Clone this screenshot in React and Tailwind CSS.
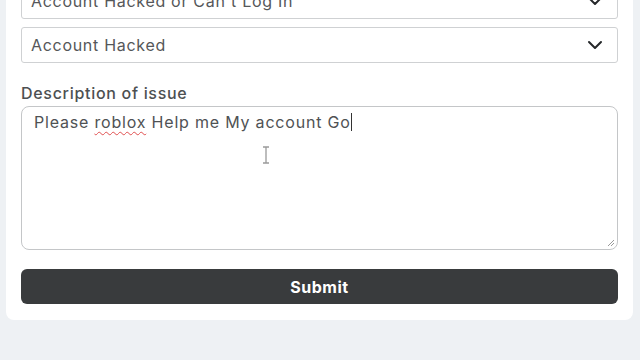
import { ChevronDown } from 'lucide-react';

function Select({ label }) {
  return (
    <div className="flex items-center justify-between h-9 px-[9px] border border-[#cfd1d3] rounded-[3px] bg-white">
      <span className="text-[16px] tracking-[0.7px] text-[#555759]">{label}</span>
      <ChevronDown className="w-6 h-6 text-[#25282a] mr-[1px]" strokeWidth={2} />
    </div>
  );
}

export default function App() {
  return (
    <div className="w-[640px] h-[360px] overflow-hidden bg-[#eef1f4]" style={{ fontFamily: 'Inter, "Noto Sans", sans-serif' }}>
      <div className="ml-[6px] mr-[7px] -mt-[17px] bg-white rounded-b-[8px] px-[15px] pb-[16px] pt-0">
        <div className="flex flex-col gap-2">
          <Select label="Account Hacked or Can't Log In" />
          <Select label="Account Hacked" />
        </div>

        <div className="mt-[20px] text-[16px] font-medium tracking-[0.7px] text-[#4d5052] leading-5 mb-[3px]">
          Description of issue
        </div>
        <div className="relative h-[144px] border border-[#c4c6c8] rounded-[8px] px-3 pt-[3px]">
          <p className="text-[16px] tracking-[0.8px] text-[#4f5254] leading-6">
            Please{' '}
            <span className="underline decoration-wavy decoration-[#e05050] decoration-1 underline-offset-[3px]">roblox</span>{' '}
            Help me My account Go
            <span className="inline-block w-px h-[18px] bg-[#333] align-[-3px]" />
          </p>
          <svg className="absolute left-[240px] top-[39px]" width="8" height="18" viewBox="0 0 8 18">
            <path d="M1 1h6M4 1v16M1 17h6" stroke="#9a9a9a" strokeWidth="1.3" fill="none" />
          </svg>
          <svg className="absolute right-[2px] bottom-[2px]" width="8" height="8" viewBox="0 0 8 8">
            <path d="M7 1L1 7M7 4L4 7" stroke="#9a9a9a" strokeWidth="1" fill="none" />
          </svg>
        </div>

        <button className="mt-[19px] w-full h-[35px] rounded-[6px] bg-[#393b3d] text-white text-[16px] font-bold tracking-[0.5px]">
          Submit
        </button>
      </div>
    </div>
  );
}
